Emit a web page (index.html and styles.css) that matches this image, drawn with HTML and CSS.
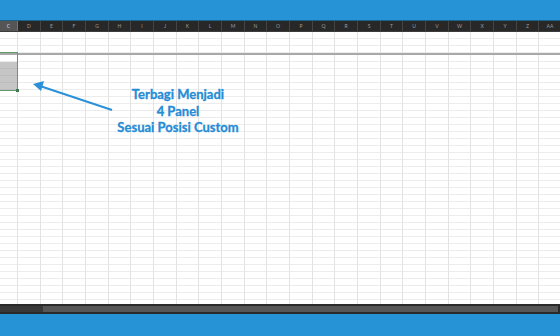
FILE: index.html
```html
<!DOCTYPE html>
<html lang="id">
<head>
  <meta charset="UTF-8" />
  <title>Split Panel</title>
  <link rel="stylesheet" href="styles.css">
</head>
<body>
  <div class="band band-top"></div>

  <div class="col-head">
    <div class="col active">C</div>
    <div class="col">D</div><div class="col">E</div><div class="col">F</div>
    <div class="col">G</div><div class="col">H</div><div class="col">I</div>
    <div class="col">J</div><div class="col">K</div><div class="col">L</div>
    <div class="col">M</div><div class="col">N</div><div class="col">O</div>
    <div class="col">P</div><div class="col">Q</div><div class="col">R</div>
    <div class="col">S</div><div class="col">T</div><div class="col">U</div>
    <div class="col">V</div><div class="col">W</div><div class="col">X</div>
    <div class="col">Y</div><div class="col">Z</div><div class="col">AA</div>
  </div>

  <div class="sheet">
    <div class="pane pane-top">
      <div class="cell first"></div><div class="cell"></div><div class="cell"></div><div class="cell"></div><div class="cell"></div>
      <div class="cell"></div><div class="cell"></div><div class="cell"></div><div class="cell"></div><div class="cell"></div>
      <div class="cell"></div><div class="cell"></div><div class="cell"></div><div class="cell"></div><div class="cell"></div>
      <div class="cell"></div><div class="cell"></div><div class="cell"></div><div class="cell"></div><div class="cell"></div>
      <div class="cell"></div><div class="cell"></div><div class="cell"></div><div class="cell"></div><div class="cell"></div>
    </div>
    <div class="split"></div>
    <div class="pane pane-bottom">
      <div class="cell first"></div><div class="cell"></div><div class="cell"></div><div class="cell"></div><div class="cell"></div>
      <div class="cell"></div><div class="cell"></div><div class="cell"></div><div class="cell"></div><div class="cell"></div>
      <div class="cell"></div><div class="cell"></div><div class="cell"></div><div class="cell"></div><div class="cell"></div>
      <div class="cell"></div><div class="cell"></div><div class="cell"></div><div class="cell"></div><div class="cell"></div>
      <div class="cell"></div><div class="cell"></div><div class="cell"></div><div class="cell"></div><div class="cell"></div>
    </div>

    <!-- seleksi sel -->
    <div class="selection">
      <div class="sel-fill"></div>
      <span class="handle"></span>
    </div>

    <!-- anotasi -->
    <svg class="arrow" viewBox="0 0 560 272" width="560" height="272">
      <line x1="112" y1="78" x2="40" y2="54" stroke="#2a90d8" stroke-width="2" />
      <polygon points="33,52 44,49 41,59" fill="#2a90d8" />
    </svg>
    <div class="note">Terbagi Menjadi<br>4 Panel<br>Sesuai Posisi Custom</div>
  </div>

  <div class="hscroll">
    <div class="track-left"></div>
    <div class="thumb"></div>
  </div>

  <div class="band band-bottom"></div>
</body>
</html>
```

FILE: styles.css
```css
body {
  margin: 0;
  width: 560px;
  height: 336px;
  overflow: hidden;
  display: flex;
  flex-direction: column;
  font-family: Lato, 'Liberation Sans', sans-serif;
  background: #fff;
}
.band {
  background: #2793d7;
  flex: 0 0 auto;
}
.band-top {
  height: 20px;
  border-bottom: 1px solid #1b5f8c;
}
.band-bottom {
  height: 22px;
}
.col-head {
  height: 11px;
  background: #282828;
  display: flex;
  flex: 0 0 auto;
  overflow: hidden;
  border-bottom: 1px solid #3c3c3c;
  box-sizing: border-box;
}
.col {
  flex: 0 0 23px;
  box-sizing: border-box;
  border-right: 1px solid #444;
  color: #9a9a9a;
  font-size: 5px;
  line-height: 10px;
  text-align: center;
}
.col.active {
  flex-basis: 18px;
  background: #555;
  color: #ddd;
  border-right-color: #777;
}
.col:nth-child(3n) {
  flex-basis: 22px;
}
.sheet {
  position: relative;
  flex: 1 1 auto;
  display: flex;
  flex-direction: column;
  overflow: hidden;
}
.pane {
  display: flex;
  background-image: repeating-linear-gradient(to bottom, transparent 0 6px, #ececec 6px 7px);
}
.cell {
  flex: 0 0 23px;
  box-sizing: border-box;
  border-right: 1px solid #e3e3e3;
}
.cell.first {
  flex-basis: 18px;
}
.cell:nth-child(3n) {
  flex-basis: 22px;
}
.pane-top {
  height: 21px;
  flex: 0 0 auto;
}
.split {
  height: 2px;
  flex: 0 0 auto;
  background: #a8a8a8;
}
.pane-bottom {
  flex: 1 1 auto;
}
.selection {
  position: absolute;
  left: -2px;
  top: 20px;
  width: 19px;
  height: 37px;
  border: 1px solid #5e9c6c;
  border-left: none;
  box-sizing: content-box;
  display: flex;
  flex-direction: column;
  justify-content: flex-end;
}
.sel-fill {
  height: 28px;
  margin-left: 2px;
  background: repeating-linear-gradient(to bottom, #c6c6c6 0 6px, #bcbcbc 6px 7px);
}
.handle {
  position: absolute;
  right: -2px;
  bottom: -2px;
  width: 3px;
  height: 3px;
  background: #3f7a4e;
}
.arrow {
  position: absolute;
  left: 0;
  top: 0;
}
.note {
  position: absolute;
  left: 98px;
  top: 54px;
  width: 160px;
  text-align: center;
  color: #258cd6;
  font-weight: 700;
  font-size: 13px;
  line-height: 16.5px;
  -webkit-text-stroke: 0.3px #258cd6;
}
.hscroll {
  height: 10px;
  flex: 0 0 auto;
  background: #2a2a2a;
  display: flex;
  align-items: center;
  padding: 0 2px 0 0;
  box-sizing: border-box;
}
.track-left {
  width: 43px;
  height: 6px;
  background: #393939;
}
.thumb {
  flex: 1 1 auto;
  height: 6px;
  background: #565656;
}
```
